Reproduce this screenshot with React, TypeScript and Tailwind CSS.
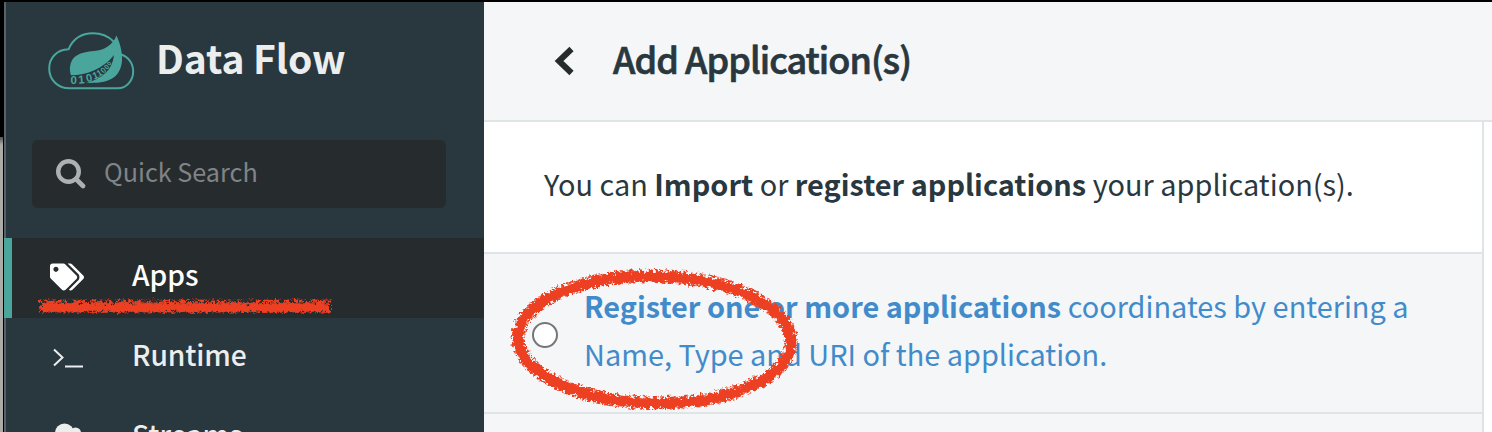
import { FaTags } from "react-icons/fa";

const DIGITS = [
  { c: "0", x: 26.5, y: 56.3, r: 0, s: 11.5 },
  { c: "1", x: 34.5, y: 55.8, r: -5, s: 11.5 },
  { c: "0", x: 43, y: 54.3, r: -14, s: 11 },
  { c: "1", x: 50, y: 51.7, r: -22, s: 10 },
  { c: "1", x: 54.7, y: 49, r: -30, s: 9 },
  { c: "0", x: 59.6, y: 45.8, r: -42, s: 8 },
  { c: "0", x: 63.2, y: 42, r: -50, s: 7 },
  { c: "0", x: 66, y: 38, r: -58, s: 6 },
];

function Logo() {
  return (
    <svg className="h-[66px] w-[94px] shrink-0" viewBox="0 0 94 66">
      <path d="M69.500 13.500C64 8 56.500 5.300 49 5.300C38 5.300 29 11 24.500 21.300C13 21.500 5.200 30 5.200 40.500C5.200 52 14 60.300 25.500 60.300H73.500C83 60.300 89.200 52 89.200 43.500C89.200 35 84 28.500 77 26.500" fill="none" stroke="#4aa69d" strokeWidth="2" />
      <path d="M72.500 7.500C68 18 60 22 50 23C36 24 27 28 26 39C25.700 42 26.200 45 27 47.300C43 47 59 41 70 27C68.500 42 58 51 42 54.800C60 55.500 76 53 78 33C78.500 24 76 15 72.500 7.500Z" fill="#4aa69d" />
      {DIGITS.map((d, i) => (
        <text
          key={i}
          transform={`translate(${d.x} ${d.y}) rotate(${d.r})`}
          fontSize={d.s}
          fontWeight="700"
          fill="#4aa69d"
          className="font-['Liberation_Sans',sans-serif]"
        >
          {d.c}
        </text>
      ))}
    </svg>
  );
}

function SearchIcon() {
  return (
    <svg className="h-[30px] w-[30px]" viewBox="0 0 30 30" fill="none" stroke="#aeb0b1">
      <circle cx="12.500" cy="12.500" r="10.300" strokeWidth="4.400" />
      <path d="M20 20L27 27" strokeWidth="4.600" strokeLinecap="round" />
    </svg>
  );
}

function TerminalIcon() {
  return (
    <svg className="h-5 w-[34px]" viewBox="0 0 34 20" fill="none" stroke="#eceeee" strokeWidth="2">
      <path d="M4 1.500L12.500 9.500L4 17.500" />
      <path d="M15 18.500H33" />
    </svg>
  );
}

function CloudIcon() {
  return (
    <svg className="mt-[-6px] h-6 w-[34px]" viewBox="0 0 34 24" fill="#eceeee">
      <circle cx="14.500" cy="10" r="9.500" />
      <circle cx="25.500" cy="10" r="5.500" />
      <circle cx="8" cy="16" r="7" />
      <circle cx="27" cy="16" r="7" />
      <path d="M8 10H27V23H8Z" />
    </svg>
  );
}

function BrushMarks() {
  return (
    <svg className="pointer-events-none absolute inset-0 h-[432px] w-[1492px]" viewBox="0 0 1492 432" fill="none" stroke="#ed4023">
      <defs>
        <filter id="rough" x="0" y="240" width="900" height="192" filterUnits="userSpaceOnUse" colorInterpolationFilters="sRGB">
          <feTurbulence type="fractalNoise" baseFrequency="0.24" numOctaves="3" seed="4" result="n" />
          <feDisplacementMap in="SourceGraphic" in2="n" scale="8" xChannelSelector="R" yChannelSelector="G" />
        </filter>
        <filter id="grain" x="0" y="240" width="900" height="192" filterUnits="userSpaceOnUse" colorInterpolationFilters="sRGB">
          <feTurbulence type="fractalNoise" baseFrequency="0.32" numOctaves="2" seed="9" result="n" />
          <feColorMatrix in="n" type="matrix" values="0 0 0 0 0  0 0 0 0 0  0 0 0 0 0  0 0 0 10 -4.5" result="m" />
          <feComposite in="SourceGraphic" in2="m" operator="in" result="c" />
          <feDisplacementMap in="c" in2="n" scale="5" xChannelSelector="G" yChannelSelector="B" />
        </filter>
      </defs>
      <g filter="url(#rough)">
        <ellipse cx="654.500" cy="340" rx="136.500" ry="63.500" strokeWidth="9.500" transform="rotate(1 654.500 340)" />
        <path d="M42 307.500H329" strokeWidth="8.500" />
      </g>
      <g filter="url(#grain)">
        <ellipse cx="654.500" cy="339.500" rx="136.500" ry="63.500" strokeWidth="14" transform="rotate(1 654.500 339.500)" />
        <path d="M39 306H331" strokeWidth="13" />
      </g>
    </svg>
  );
}

export default function App() {
  return (
    <div className="relative flex h-[432px] w-[1492px] flex-col overflow-hidden bg-white font-['Noto_Sans_CJK_SC',sans-serif] text-[28.9px]">
      <div className="h-[2px] shrink-0 bg-black" />
      <div className="flex h-[430px]">
        <div className="flex w-[4px] flex-col bg-black">
          <div className="mt-[135px] w-[3px] flex-1 bg-gradient-to-b from-[#55534f] via-[#adaba8] via-[8px] to-[#adaba8]" />
        </div>
        <aside className="flex w-[480px] flex-col overflow-hidden bg-[#29373f] text-[#eceeee]">
          <div className="flex h-[118px] shrink-0 items-start border-l-2 border-[#56626a] pl-[38px] pt-[26px]">
            <Logo />
            <span className="ml-[18px] mt-[9px] text-[39px] font-bold leading-10 tracking-[-0.1px]">Data Flow</span>
          </div>
          <div className="flex h-[118px] shrink-0 border-l-2 border-[#56626a] pl-[26px] pt-5">
            <div className="flex h-[68px] w-[414px] items-center rounded-md bg-[#262b2e] pl-6">
              <SearchIcon />
              <span className="ml-[18px] pb-[7px] text-[25.2px] leading-8 text-[#808486]">Quick Search</span>
            </div>
          </div>
          <div className="flex h-20 shrink-0 items-center border-l-8 border-[#4aa69d] bg-[#262b2e] pl-[38px] text-white">
            <FaTags size={34} className="mt-[-3px]" />
            <span className="ml-[48px] pb-[8px] text-[28.2px] font-medium leading-9">Apps</span>
          </div>
          <div className="flex h-20 shrink-0 items-center border-l-2 border-[#56626a] pl-[44px]">
            <TerminalIcon />
            <span className="ml-[48px] pb-[8px] text-[28.2px] font-medium leading-9 tracking-[-0.1px]">Runtime</span>
          </div>
          <div className="flex h-20 shrink-0 items-center border-l-2 border-[#56626a] pl-[44px]">
            <CloudIcon />
            <span className="ml-[48px] pb-[8px] text-[28.2px] font-medium leading-9">Streams</span>
          </div>
        </aside>
        <main className="flex flex-1 flex-col bg-white text-[#29373f]">
          <div className="flex h-[120px] shrink-0 items-center border-b-2 border-[#dfe5e6] bg-[#f4f6f8] pl-[70px]">
            <svg className="h-[30px] w-5" viewBox="0 0 20 30" fill="none" stroke="#262b2e" strokeWidth="6">
              <path d="M17.500 3L5 15L17.500 27" />
            </svg>
            <h1 className="ml-[39px] pb-[7px] text-[36px] font-medium leading-10 tracking-[-0.95px] [-webkit-text-stroke:0.7px_#29373f]">Add Application(s)</h1>
          </div>
          <div className="flex w-[1000px] flex-1 flex-col border-r-2 border-[#dfe5e6]">
            <div className="flex h-[132px] shrink-0 items-center border-b-2 border-[#dfe5e6] pl-[60px]">
              <p className="pb-[9px] leading-10">You can <b>Import</b> or <b>register applications</b> your application(s).</p>
            </div>
            <div className="flex h-[160px] shrink-0 items-center border-b-2 border-[#dfe5e6] bg-[#f4f6f8] pl-12">
              <span className="mt-1 h-[26px] w-[26px] rounded-full border-2 border-[#767676] bg-white" />
              <p className="ml-[26px] whitespace-nowrap pb-[9px] leading-[48px] text-[#428bca]"><b>Register one or more applications</b> coordinates by entering a<br />Name, Type and URI of the application.</p>
            </div>
            <div className="flex-1 bg-[#f4f6f8]" />
          </div>
        </main>
      </div>
      <BrushMarks />
    </div>
  );
}
